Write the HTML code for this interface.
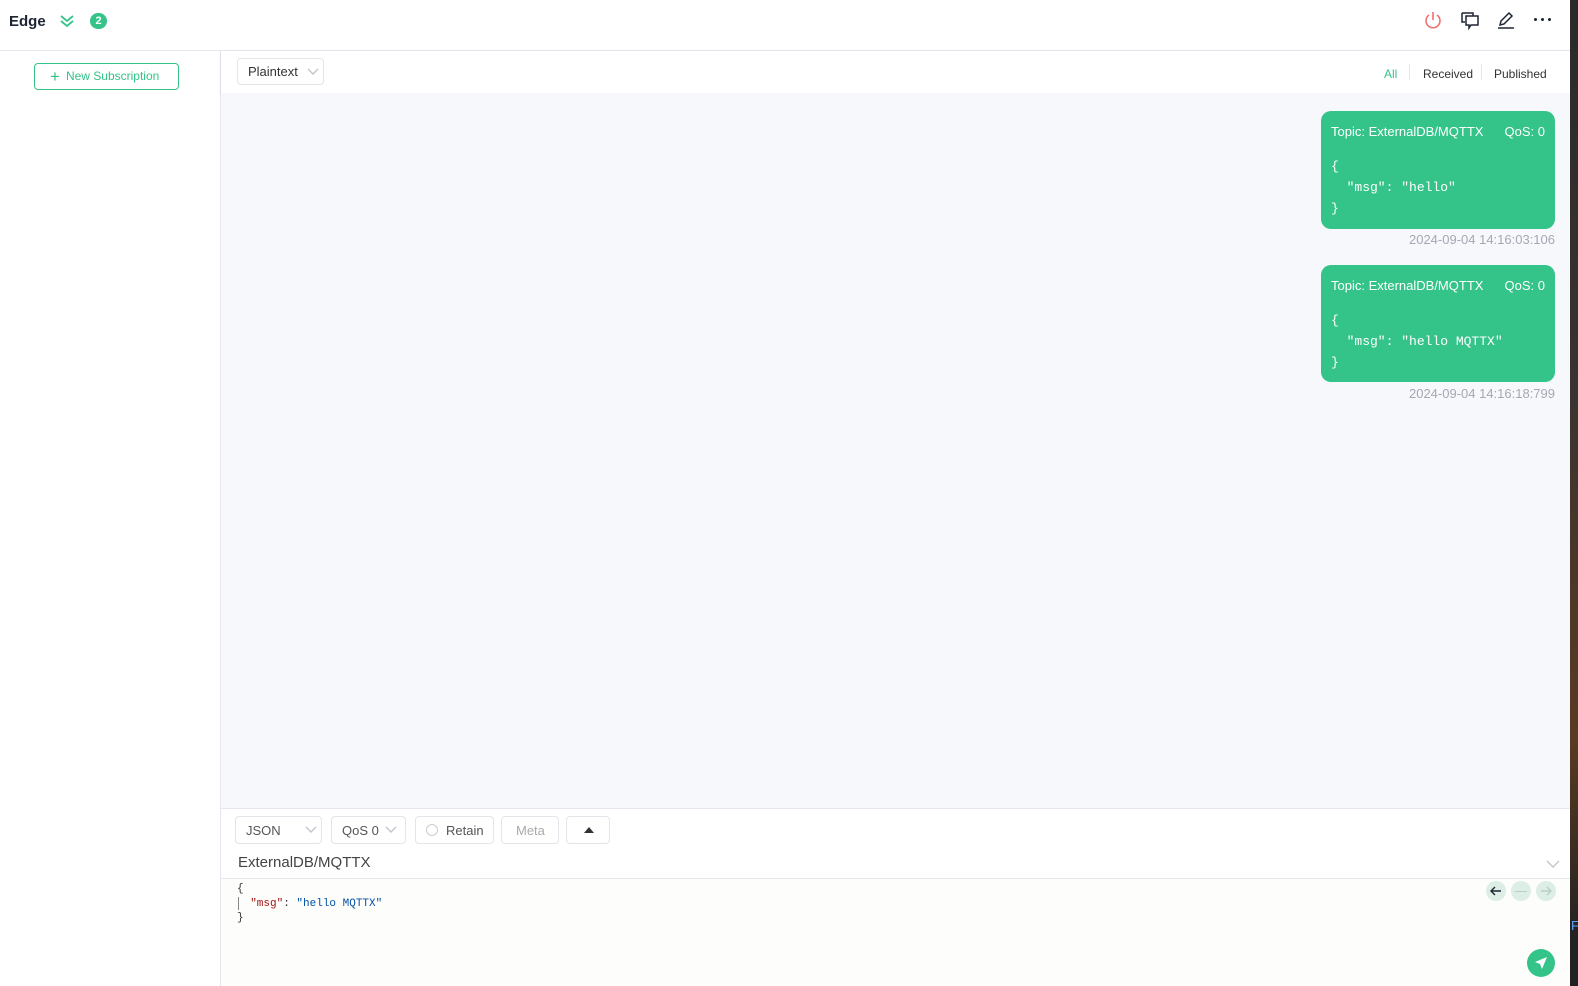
<!DOCTYPE html>
<html><head><meta charset="utf-8"><style>
*{box-sizing:border-box;margin:0;padding:0}
body{width:1578px;height:986px;overflow:hidden;font-family:"Liberation Sans",sans-serif;background:#1a1a1a;position:relative}
.abs{position:absolute}
#app{position:absolute;left:0;top:0;width:1570px;height:986px;background:#fff}
#dark{position:absolute;left:1570px;top:0;width:8px;height:986px;background:linear-gradient(#2a2a2a,#3a3430 40%,#5a3a22 75%,#222 95%)}
.sel{position:absolute;border:1px solid #e4e4ea;border-radius:4px;background:#fff;font-size:13px;color:#555;display:flex;align-items:center;padding-left:10px}
.bubble{position:absolute;left:1321px;width:234px;background:#34c388;border-radius:10px;color:#fff}
.bubble .t{position:absolute;left:10px;top:13px;font-size:13px}
.bubble .q{position:absolute;right:10px;top:13px;font-size:13px}
.bubble pre{position:absolute;left:10px;top:45px;font-family:"Liberation Mono",monospace;font-size:13px;line-height:21px}
.ts{position:absolute;right:15px;font-size:13px;color:#a4a8b3}
.nb{position:absolute;width:20px;height:20px;border-radius:50%;background:#dceee6}
.dot{position:absolute;width:3px;height:3px;border-radius:50%;background:#1d2433;top:18px}
</style></head><body>
<div id="app">
 <div class="abs" style="left:9px;top:13px;font-size:15px;font-weight:bold;color:#1d2433">Edge</div>
 <svg class="abs" style="left:59px;top:13px" width="16" height="16" viewBox="0 0 16 16" fill="none" stroke="#34c388" stroke-width="1.8"><path d="M2 3l6 5 6-5M2 8l6 5 6-5"/></svg>
 <div class="abs" style="left:90px;top:13px;width:17px;height:16px;border-radius:8px;background:#34c388;color:#fff;font-size:11px;text-align:center;line-height:16px;font-weight:bold">2</div>
 <svg class="abs" style="left:1424px;top:10px" width="18" height="20" viewBox="0 0 18 20" fill="none" stroke="#f07070" stroke-width="1.6"><path d="M9 2v8"/><path d="M5 5a7 7 0 1 0 8 0"/></svg>
 <svg class="abs" style="left:1460px;top:10px" width="20" height="20" viewBox="0 0 20 20" fill="none" stroke="#1d2433" stroke-width="1.5"><path d="M2 3h11v3"/><path d="M2 3v9h3"/><path d="M6 6h12v9h-7l-2 3v-3H6z"/></svg>
 <svg class="abs" style="left:1496px;top:10px" width="20" height="20" viewBox="0 0 20 20" fill="none" stroke="#1d2433" stroke-width="1.5"><path d="M4 15l1-4 8-8 3 3-8 8z"/><path d="M2 18h16"/></svg>
 <div class="dot" style="left:1534px"></div><div class="dot" style="left:1541px"></div><div class="dot" style="left:1548px"></div>
 <div class="abs" style="left:0;top:50px;width:1570px;height:1px;background:#e6e6ee"></div>
 <div class="abs" style="left:220px;top:51px;width:1px;height:935px;background:#e6e6ee"></div>
 <div class="abs" style="left:34px;top:63px;width:145px;height:27px;border:1px solid #34c388;border-radius:4px;color:#34c388;font-size:12px;line-height:25px;padding-left:15px"><span style="font-size:17px;vertical-align:-2px;margin-right:6px">+</span>New Subscription</div>
 <div class="abs" style="left:221px;top:51px;width:1349px;height:42px;background:#fff;box-shadow:0 1px 3px rgba(0,0,0,.08)"></div>
 <div class="abs" style="left:221px;top:93px;width:1349px;height:716px;background:#f7f8fc"></div>
 <div class="sel" style="left:237px;top:58px;width:87px;height:27px;color:#333">Plaintext <svg style="margin-left:9px" width="12" height="8" viewBox="0 0 12 8" fill="none" stroke="#c0c4cc" stroke-width="1.4"><path d="M1 1l5 5 5-5"/></svg></div>
 <div class="abs" style="left:1384px;top:67px;font-size:12px;color:#34c388">All</div>
 <div class="abs" style="left:1409px;top:64px;width:1px;height:16px;background:#e4e4ea"></div>
 <div class="abs" style="left:1423px;top:67px;font-size:12px;color:#333">Received</div>
 <div class="abs" style="left:1481px;top:64px;width:1px;height:16px;background:#e4e4ea"></div>
 <div class="abs" style="left:1494px;top:67px;font-size:12px;color:#333">Published</div>

 <div class="bubble" style="top:111px;height:118px"><span class="t">Topic: ExternalDB/MQTTX</span><span class="q">QoS: 0</span><pre>{
  "msg": "hello"
}</pre></div>
 <div class="ts" style="top:232px;right:15px">2024-09-04 14:16:03:106</div>
 <div class="bubble" style="top:265px;height:117px"><span class="t">Topic: ExternalDB/MQTTX</span><span class="q">QoS: 0</span><pre>{
  "msg": "hello MQTTX"
}</pre></div>
 <div class="ts" style="top:386px">2024-09-04 14:16:18:799</div>

 <div class="abs" style="left:221px;top:808px;width:1349px;height:1px;background:#e6e6ee"></div>
 <div class="sel" style="left:235px;top:816px;width:87px;height:28px">JSON<svg style="margin-left:24px" width="12" height="8" viewBox="0 0 12 8" fill="none" stroke="#c0c4cc" stroke-width="1.4"><path d="M1 1l5 5 5-5"/></svg></div>
 <div class="sel" style="left:331px;top:816px;width:75px;height:28px">QoS 0<svg style="margin-left:6px" width="12" height="8" viewBox="0 0 12 8" fill="none" stroke="#c0c4cc" stroke-width="1.4"><path d="M1 1l5 5 5-5"/></svg></div>
 <div class="sel" style="left:415px;top:816px;width:79px;height:28px"><span style="display:inline-block;width:12px;height:12px;border:1px solid #ccc;border-radius:50%;margin-right:8px"></span>Retain</div>
 <div class="sel" style="left:501px;top:816px;width:58px;height:28px;color:#aaa;padding-left:14px">Meta</div>
 <div class="sel" style="left:566px;top:816px;width:44px;height:28px;padding-left:17px"><svg width="10" height="6"><path d="M0 6L5 0 10 6z" fill="#333"/></svg></div>
 <div class="abs" style="left:238px;top:854px;font-size:15px;color:#444">ExternalDB/MQTTX</div>
 <svg class="abs" style="left:1546px;top:860px" width="14" height="9" viewBox="0 0 14 9" fill="none" stroke="#c0c4cc" stroke-width="1.4"><path d="M1 1l6 6 6-6"/></svg>
 <div class="abs" style="left:221px;top:878px;width:1349px;height:1px;background:#e6e6ee"></div>
 <div class="abs" style="left:221px;top:879px;width:1349px;height:107px;background:#fdfdfb"></div>
 <pre class="abs" style="left:237px;top:882px;font-family:'Liberation Mono',monospace;font-size:11px;line-height:14.5px;color:#333">{
  <span style="color:#a31515">"msg"</span>: <span style="color:#0451a5">"hello MQTTX"</span>
}</pre>
 <div class="abs" style="left:238px;top:897px;width:1px;height:13px;background:#888"></div>
 <div class="nb" style="left:1486px;top:881px"></div><svg class="abs" style="left:1490px;top:885px" width="12" height="12" viewBox="0 0 12 12" fill="none" stroke="#1d2433" stroke-width="1.4"><path d="M11 6H1M5 2L1 6l4 4"/></svg>
 <div class="nb" style="left:1511px;top:881px"></div><div class="abs" style="left:1515px;top:891px;width:12px;height:1px;background:#b8cfc4"></div>
 <div class="nb" style="left:1536px;top:881px"></div><svg class="abs" style="left:1540px;top:885px" width="12" height="12" viewBox="0 0 12 12" fill="none" stroke="#b8cfc4" stroke-width="1.4"><path d="M1 6h10M7 2l4 4-4 4"/></svg>
 <div class="abs" style="left:1527px;top:949px;width:28px;height:28px;border-radius:50%;background:#34c388"></div>
 <svg class="abs" style="left:1533px;top:955px" width="16" height="16" viewBox="0 0 16 16"><path d="M14 2L2 7l5 2 2 5z" fill="#fff"/></svg>
</div>
<div id="dark"></div>
<div class="abs" style="left:1571px;top:918px;font-size:13px;color:#5aa0ff">F</div>
</body></html>
